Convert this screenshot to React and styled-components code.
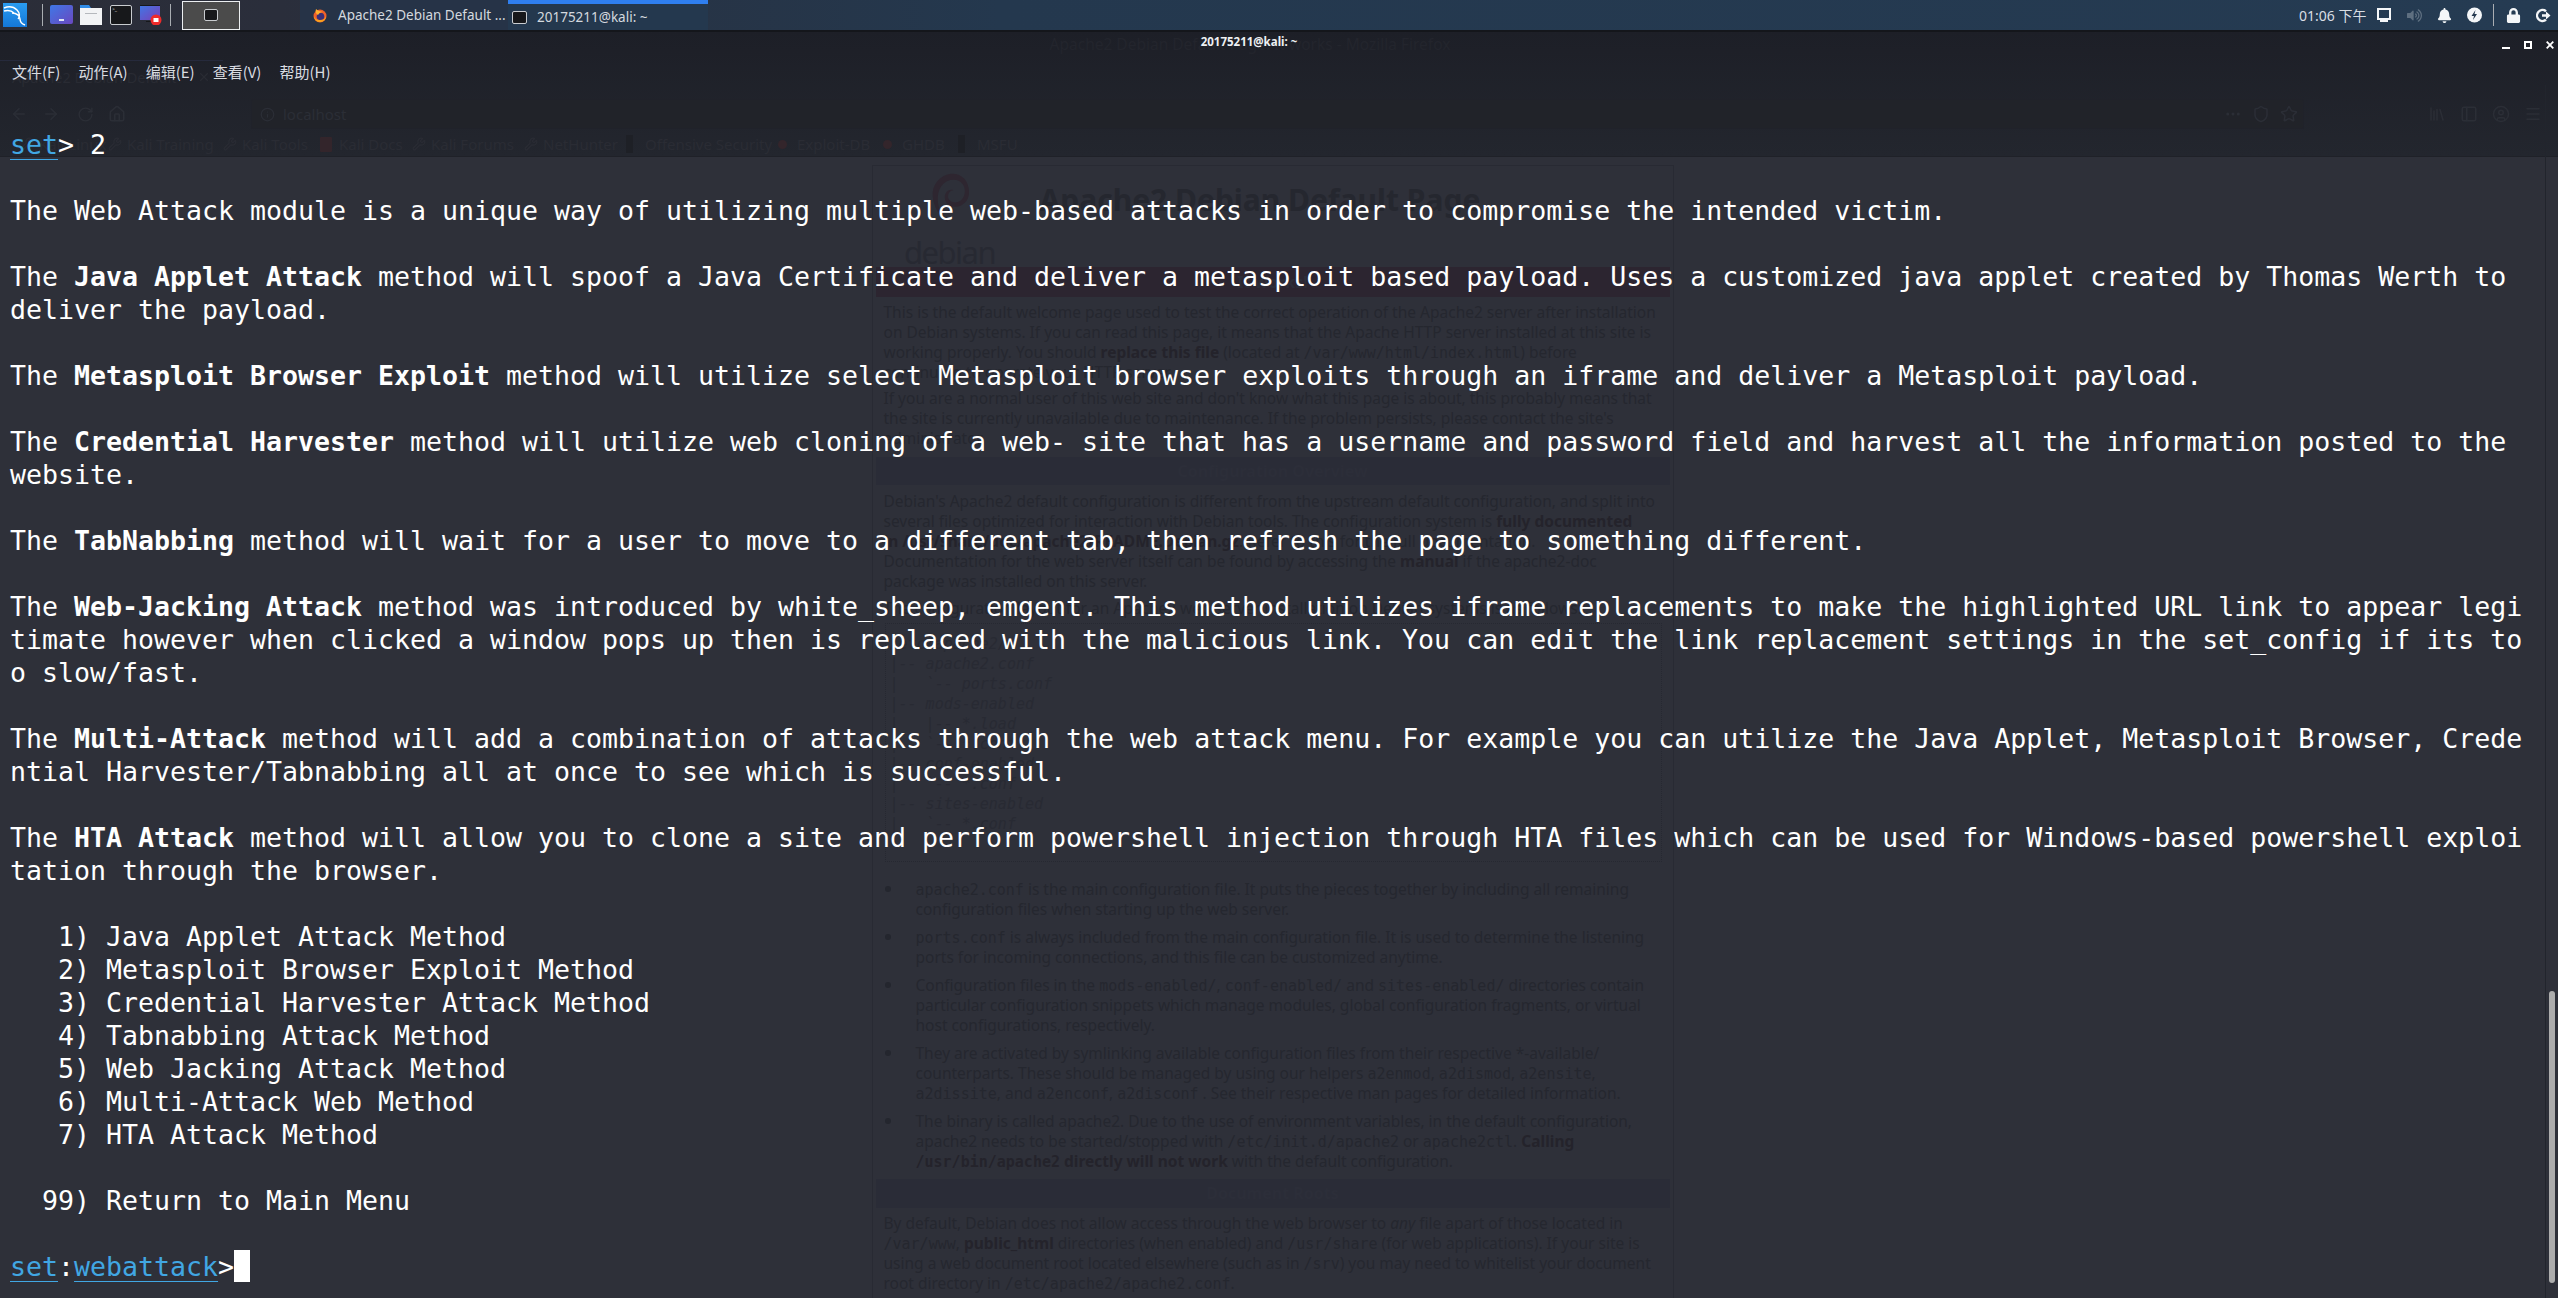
import React from "react"
import styled, { createGlobalStyle } from "styled-components"
import { FaBell, FaLock, FaVolumeUp } from "react-icons/fa"
import {
  ArrowLeft,
  ArrowRight,
  RotateCw,
  Home,
  Info,
  Star,
  Library,
  PanelLeft,
  CircleUser,
  Menu,
  Wrench,
  X,
  Shield,
  MoreHorizontal,
} from "lucide-react"

const GlobalStyle = createGlobalStyle`
  html, body {
    margin: 0;
    padding: 0;
    background: #2e3039;
    overflow: hidden;
  }
`

const Desktop = styled.div`
  width: 2558px;
  height: 1298px;
  display: flex;
  flex-direction: column;
  overflow: hidden;
  font-family: "Noto Sans", "Noto Sans CJK SC", sans-serif;
`

/* top panel */
const Panel = styled.div`
  height: 30px;
  flex: none;
  display: flex;
  align-items: center;
  border-bottom: 2px solid #14161b;
  background: linear-gradient(to right, #2b2d38 0, #2a2e3b 280px, #24384e 1000px, #253b52 2558px);
`

const KaliButton = styled.div`
  width: 24px;
  height: 24px;
  margin-left: 3px;
`

const PanelSep = styled.div`
  width: 1px;
  height: 22px;
  background: #a9adb2;
  margin: ${(p) => p.$margin};
`

const Launcher = styled.div`
  width: ${(p) => p.$w || 22}px;
  height: 20px;
  margin-left: ${(p) => p.$ml || 0}px;
  display: flex;
`

const Workspace = styled.div`
  width: 58px;
  height: 29px;
  margin-left: 11px;
  box-sizing: border-box;
  border: 1px solid #eceff1;
  background: #4b4b4b;
  display: flex;
  align-items: center;
  justify-content: center;
`

const TermGlyph = styled.div`
  width: ${(p) => p.$size}px;
  height: ${(p) => p.$size - 2}px;
  box-sizing: border-box;
  border: 1px solid #c9ccd0;
  border-radius: 2px;
  background: #17181b;
  color: #ddd;
  font-size: 5px;
  line-height: 6px;
  padding-left: 1px;
`

const Task = styled.div`
  width: ${(p) => p.$w}px;
  height: 30px;
  margin-left: ${(p) => p.$ml || 0}px;
  box-sizing: border-box;
  padding-left: ${(p) => p.$pad}px;
  display: flex;
  align-items: center;
  gap: ${(p) => p.$gap}px;
  color: #d4d9df;
  font-size: 13.5px;
  white-space: nowrap;
  background: ${(p) => (p.$active ? "#24384e" : "#263347")};
  border-top: ${(p) => (p.$active ? "4px solid #2f7ff0" : "0")};
`

const Tray = styled.div`
  margin-left: auto;
  display: flex;
  align-items: center;
  height: 30px;
  color: #f2f4f6;
`

const Clock = styled.div`
  font-size: 14px;
  color: #d9dee4;
  width: 70px;
  white-space: nowrap;
`

const TraySlot = styled.div`
  width: ${(p) => p.$w || 30}px;
  display: flex;
  justify-content: center;
  color: ${(p) => p.$color || "#f4f6f8"};
`

/* terminal window, with the browser showing through it */
const Win = styled.div`
  position: relative;
  flex: 1;
  overflow: hidden;
`

const Behind = styled.div`
  position: absolute;
  inset: 0;
  display: flex;
  flex-direction: column;
  background: #2e3039;
  color: #25272f;
`

const BrowserChrome = styled.div`
  height: 125px;
  flex: none;
  box-sizing: border-box;
  border-bottom: 1px solid #1f2128;
  background: linear-gradient(#1d1f27, #23262e);
  display: flex;
  flex-direction: column;
`

const BrowserTitle = styled.div`
  height: 28px;
  flex: none;
  box-sizing: border-box;
  padding-right: 58px;
  text-align: center;
  font-size: 15.5px;
  line-height: 24px;
  color: #23252d;
`

const TabRow = styled.div`
  height: 33px;
  flex: none;
`

const BrowserTab = styled.div`
  width: 223px;
  height: 33px;
  box-sizing: border-box;
  border-top: 1px solid #262a3c;
  padding: 0 12px 0 12px;
  display: flex;
  align-items: center;
  justify-content: space-between;
  font-size: 14.5px;
  color: #292b33;
`

const ToolRow = styled.div`
  height: 34px;
  flex: none;
  margin-top: 4px;
  display: flex;
  align-items: center;
  color: #2b2e36;
`

const ToolSlot = styled.div`
  width: ${(p) => p.$w || 32}px;
  margin-left: ${(p) => p.$ml || 0}px;
  display: flex;
  justify-content: center;
`

const AddressBar = styled.div`
  width: 2053px;
  height: 30px;
  margin-left: 118px;
  box-sizing: border-box;
  border: 1px solid #20222a;
  border-radius: 2px;
  background: #212329;
  display: flex;
  align-items: center;
  padding-left: 8px;
  gap: 8px;
  font-size: 15px;
  color: #2b2e36;
`

const AddressActions = styled.div`
  margin-left: auto;
  display: flex;
`

const Bookmarks = styled.div`
  display: flex;
  align-items: center;
  height: 26px;
  flex: none;
  padding-left: 20px;
  font-size: 15px;
  color: #2a2c34;
  white-space: pre;
`

const Bookmark = styled.div`
  width: ${(p) => p.$w}px;
  flex: none;
  display: flex;
  align-items: center;
`

const Favicon = styled.div`
  width: 19px;
  flex: none;
  display: flex;
`

const RedMark = styled.div`
  width: ${(p) => (p.$round ? 9 : 12)}px;
  height: ${(p) => (p.$round ? 9 : 15)}px;
  border-radius: ${(p) => (p.$round ? "50%" : "1px")};
  background: #33252b;
`

const DarkBar = styled.div`
  width: 7px;
  height: 18px;
  background: #1e2026;
`

const PageColumn = styled.div`
  width: 2545px;
  flex: 1;
  display: flex;
  justify-content: center;
  padding-top: 8px;
`

const GutterLine = styled.div`
  position: absolute;
  left: 2545px;
  top: 53px;
  bottom: 0;
  width: 1px;
  background: #22252d;
`

const Page = styled.div`
  width: 802px;
  box-sizing: border-box;
  border: 1px solid #282a33;
  border-bottom: 0;
  padding: 0 3px;
  font-size: 15.5px;
  line-height: 20px;
  white-space: pre;
`

const PageHead = styled.div`
  height: 101px;
  display: flex;
`

const LogoBox = styled.div`
  width: 76px;
  margin-left: 36px;
  padding-top: 6px;
  display: flex;
  flex-direction: column;
  align-items: center;
  color: #272932;
  font-size: 31px;
  line-height: 30px;
  letter-spacing: -1.5px;
`

const LogoWord = styled.div`
  margin-top: 13px;
`

const PageTitle = styled.div`
  margin-left: 52px;
  margin-top: 14px;
  font-size: 30px;
  line-height: 40px;
  font-weight: 700;
  color: #25272f;
`

const Band = styled.div`
  height: ${(p) => p.$h}px;
  line-height: ${(p) => p.$h}px;
  margin-top: ${(p) => p.$mt || 0}px;
  background: ${(p) => p.$bg || "#2a2c37"};
  text-align: center;
  font-weight: 700;
  font-size: 16px;
  color: #2c2e39;
`

const Body = styled.div`
  padding: 0 8px;
  margin-top: ${(p) => p.$mt || 0}px;
`

const Para = styled.div`
  margin-top: ${(p) => p.$mt || 0}px;
`

const Code = styled.span`
  font-family: "DejaVu Sans Mono", monospace;
  font-size: 15px;
  line-height: 0;
`

const Strong = styled.b`
  font-weight: 700;
  color: #24232b;
`

const Pre = styled.div`
  margin: 5px 0 0 1px;
  height: 239px;
  box-sizing: border-box;
  border: 1px dotted #262831;
  padding: 10px 4px;
  font-family: "DejaVu Sans Mono", monospace;
  font-size: 15px;
  font-style: italic;
  color: #282a33;
`

const BulletList = styled.ul`
  list-style: none;
  margin: 17px 0 0 0;
  padding: 0;
`

const Bullet = styled.li`
  position: relative;
  padding-left: 32px;
  margin-bottom: 8px;
  &::before {
    content: "";
    position: absolute;
    left: 1px;
    top: 7px;
    width: 6px;
    height: 6px;
    border-radius: 50%;
    background: #24262e;
  }
`

const Foreground = styled.div`
  position: absolute;
  inset: 0;
  display: flex;
  flex-direction: column;
`

const TitleBar = styled.div`
  height: 26px;
  flex: none;
  display: flex;
  align-items: center;
  justify-content: center;
  position: relative;
  font-size: 11.5px;
  font-weight: 700;
  color: #eef0f3;
  padding: 0 60px 7px 0;
  box-sizing: border-box;
`

const WinButtons = styled.div`
  position: absolute;
  right: 4px;
  top: 9px;
  display: flex;
  gap: 14px;
`

const MenuBar = styled.div`
  height: 26px;
  flex: none;
  display: flex;
  align-items: center;
  padding-left: 12px;
  gap: 18px;
  font-size: 15px;
  color: #d9dce1;
  font-family: "Noto Sans CJK SC", "Noto Sans", sans-serif;
`

const Output = styled.div`
  padding: 44px 0 0 10px;
  font-family: "DejaVu Sans Mono", monospace;
  font-size: 26.58px;
  color: #ffffff;
`

const Line = styled.div`
  height: 33px;
  line-height: 33px;
  white-space: pre;
`

const Bold = styled.b`
  font-weight: 700;
`

const Prompt = styled.span`
  color: #41a7e3;
  text-decoration: underline;
  text-decoration-thickness: 1px;
  text-underline-offset: 5px;
`

const Caret = styled.span`
  display: inline-block;
  width: 16px;
  height: 32px;
  background: #ffffff;
  vertical-align: top;
`

const ScrollThumb = styled.div`
  position: absolute;
  right: 3px;
  bottom: 15px;
  width: 6px;
  height: 292px;
  border-radius: 3px;
  background: #adadad;
`

const KaliLogo = () => (
  <svg width="24" height="24" viewBox="0 0 24 24">
    <defs>
      <linearGradient id="kali" x1="0" y1="0" x2="0" y2="1">
        <stop offset="0" stopColor="#2a9cf0" />
        <stop offset="1" stopColor="#1478d8" />
      </linearGradient>
    </defs>
    <rect width="24" height="24" fill="url(#kali)" />
    <path d="M1 5c5-2 10-1 13 2 3 3 3 7 1 9M1 8c4-1 8 0 10 2M9 10c5 0 8 3 8 6 0 3 2 5 5 6" fill="none" stroke="#fff" strokeWidth="1.5" />
  </svg>
)

const AppGrid = () => (
  <svg width="23" height="19" viewBox="0 0 23 19">
    <defs>
      <linearGradient id="grid" x1="0" y1="0" x2="1" y2="1">
        <stop offset="0" stopColor="#3f78e6" />
        <stop offset="1" stopColor="#6a48c0" />
      </linearGradient>
    </defs>
    <rect width="23" height="19" rx="2" fill="url(#grid)" />
    <rect x="9" y="14" width="5" height="2" fill="#dfe6f5" />
  </svg>
)

const FilesIcon = () => (
  <svg width="22" height="20" viewBox="0 0 22 20">
    <path d="M0 0h9l2 3H0z" fill="#2f8be6" />
    <rect y="3" width="22" height="17" fill="#f2f3f5" />
    <rect x="5" y="8" width="12" height="1" fill="#b5b8bd" />
  </svg>
)

const ScreenRec = () => (
  <svg width="22" height="20" viewBox="0 0 22 20">
    <defs>
      <linearGradient id="rec" x1="0" y1="0" x2="1" y2="1">
        <stop offset="0" stopColor="#3f78e6" />
        <stop offset="1" stopColor="#7a3fb8" />
      </linearGradient>
    </defs>
    <rect width="20" height="15" fill="url(#rec)" />
    <rect y="0" width="20" height="1" fill="#17181b" />
    <rect x="6" y="16" width="8" height="1" fill="#17181b" />
    <circle cx="16" cy="15" r="5.5" fill="#ee2b2b" />
    <rect x="13.5" y="13" width="5" height="4" fill="#fff" />
  </svg>
)

const FirefoxIcon = () => (
  <svg width="14" height="15" viewBox="0 0 14 15">
    <circle cx="7" cy="8" r="6.5" fill="#f0602a" />
    <circle cx="7.5" cy="8.5" r="3.8" fill="#3a2f78" />
    <path d="M3 1c-1 3 0 5 2 6 1-2 3-3 5-3-3-1-5-1-7-3z" fill="#ffb02e" />
    <path d="M1 8c0 4 3 6 6 6 3 0 6-2 6-6-1 3-3 4-6 4-3 0-5-1-6-4z" fill="#f9a01e" />
  </svg>
)

const TrayMonitor = () => (
  <svg width="14" height="15" viewBox="0 0 14 15">
    <path d="M1 1h12v10H1z" fill="none" stroke="#f4f6f8" strokeWidth="2" />
    <rect x="3" y="12" width="8" height="2" fill="#f4f6f8" />
  </svg>
)

const TrayBolt = () => (
  <svg width="15" height="16" viewBox="0 0 15 16">
    <circle cx="7.5" cy="8" r="7.5" fill="#f4f6f8" />
    <path d="M8.5 3 4.5 9h2.5l-1 4 4-6H7.5z" fill="#24384e" />
  </svg>
)

const TrayLogout = () => (
  <svg width="15" height="15" viewBox="0 0 15 15">
    <path d="M10 3.2A5.5 5.5 0 1 0 10 11.8" fill="none" stroke="#f4f6f8" strokeWidth="2.4" />
    <path d="M6 6.2h4V3.5l4.5 4-4.5 4V8.8H6z" fill="#f4f6f8" />
  </svg>
)

const MinButton = () => (
  <svg width="8" height="8" viewBox="0 0 8 8">
    <rect y="6" width="8" height="2" fill="#fff" />
  </svg>
)

const MaxButton = () => (
  <svg width="8" height="8" viewBox="0 0 8 8">
    <path d="M1 1h6v6H1z" fill="none" stroke="#fff" strokeWidth="2" />
  </svg>
)

const CloseButton = () => (
  <svg width="8" height="8" viewBox="0 0 8 8">
    <path d="M.7.7l6.6 6.6M7.3.7.7 7.3" stroke="#fff" strokeWidth="1.8" />
  </svg>
)

const DebianSwirl = () => (
  <svg width="46" height="60" viewBox="0 0 46 60">
    <path d="M24 2C10 4 2 16 3 28c1 12 8 24 18 30-8-8-13-18-12-30C10 17 17 9 27 9c9 0 14 7 13 15-1 8-7 12-13 11-5-1-7-5-6-9 1-3 3-5 6-5-5-2-10 2-10 8 0 7 6 11 12 11 9 0 16-7 16-17C45 10 36 1 24 2z" fill="#2e2630" />
  </svg>
)

const KaliFav = () => (
  <Favicon>
    <Wrench size={14} />
  </Favicon>
)

const App = () => (
  <Desktop>
    <GlobalStyle />
    <Panel>
      <KaliButton>
        <KaliLogo />
      </KaliButton>
      <PanelSep $margin="0 0 0 15px" />
      <Launcher $ml={7} $w={23}>
        <AppGrid />
      </Launcher>
      <Launcher $ml={7}>
        <FilesIcon />
      </Launcher>
      <Launcher $ml={8}>
        <TermGlyph $size={22}>&gt;_</TermGlyph>
      </Launcher>
      <Launcher $ml={8}>
        <ScreenRec />
      </Launcher>
      <PanelSep $margin="0 0 0 8px" />
      <Workspace>
        <TermGlyph $size={14} />
      </Workspace>
      <Task $w={208} $ml={60} $pad={13} $gap={11}>
        <FirefoxIcon />
        Apache2 Debian Default ...
      </Task>
      <Task $w={200} $pad={4} $gap={10} $active>
        <TermGlyph $size={15} />
        20175211@kali: ~
      </Task>
      <Tray>
        <Clock>01:06 下午</Clock>
        <TraySlot $w={30}>
          <TrayMonitor />
        </TraySlot>
        <TraySlot $w={30} $color="#5e6f80">
          <FaVolumeUp size={15} />
        </TraySlot>
        <TraySlot $w={30}>
          <FaBell size={15} />
        </TraySlot>
        <TraySlot $w={30}>
          <TrayBolt />
        </TraySlot>
        <PanelSep $margin="0 4px" />
        <TraySlot $w={30}>
          <FaLock size={15} />
        </TraySlot>
        <TraySlot $w={30}>
          <TrayLogout />
        </TraySlot>
      </Tray>
    </Panel>

    <Win>
      <Behind>
        <BrowserChrome>
          <BrowserTitle>Apache2 Debian Default Page: It works - Mozilla Firefox</BrowserTitle>
          <TabRow>
            <BrowserTab>
              Apache2 Debian Default
              <X size={14} />
            </BrowserTab>
          </TabRow>
          <ToolRow>
            <ToolSlot $ml={3}>
              <ArrowLeft size={18} />
            </ToolSlot>
            <ToolSlot>
              <ArrowRight size={18} />
            </ToolSlot>
            <ToolSlot $ml={2}>
              <RotateCw size={17} />
            </ToolSlot>
            <ToolSlot>
              <Home size={18} />
            </ToolSlot>
            <AddressBar>
              <Info size={15} />
              localhost
              <AddressActions>
                <ToolSlot $w={28}>
                  <MoreHorizontal size={18} />
                </ToolSlot>
                <ToolSlot $w={28}>
                  <Shield size={18} />
                </ToolSlot>
                <ToolSlot $w={28}>
                  <Star size={18} />
                </ToolSlot>
              </AddressActions>
            </AddressBar>
            <ToolSlot $ml={117} $w={32}>
              <Library size={18} />
            </ToolSlot>
            <ToolSlot $w={32}>
              <PanelLeft size={18} />
            </ToolSlot>
            <ToolSlot $w={32}>
              <CircleUser size={18} />
            </ToolSlot>
            <ToolSlot $w={32}>
              <Menu size={18} />
            </ToolSlot>
          </ToolRow>
          <Bookmarks>
            <Bookmark $w={88}><KaliFav />Kali Linux</Bookmark>
            <Bookmark $w={115}><KaliFav />Kali Training</Bookmark>
            <Bookmark $w={97}><KaliFav />Kali Tools</Bookmark>
            <Bookmark $w={92}><Favicon><RedMark /></Favicon>Kali Docs</Bookmark>
            <Bookmark $w={112}><KaliFav />Kali Forums</Bookmark>
            <Bookmark $w={102}><KaliFav />NetHunter</Bookmark>
            <Bookmark $w={152}><Favicon><DarkBar /></Favicon>Offensive Security</Bookmark>
            <Bookmark $w={105}><Favicon><RedMark $round /></Favicon>Exploit-DB</Bookmark>
            <Bookmark $w={75}><Favicon><RedMark $round /></Favicon>GHDB</Bookmark>
            <Bookmark $w={60}><Favicon><DarkBar /></Favicon>MSFU</Bookmark>
          </Bookmarks>
        </BrowserChrome>
        <PageColumn>
          <Page>
            <PageHead>
              <LogoBox>
                <DebianSwirl />
                <LogoWord>debian</LogoWord>
              </LogoBox>
              <PageTitle>Apache2 Debian Default Page</PageTitle>
            </PageHead>
            <Band $h={30} $bg="#2c2530">It works!</Band>
            <Body $mt={5}>
              <Para>
                {"This is the default welcome page used to test the correct operation of the Apache2 server after installation\n"}
                {"on Debian systems. If you can read this page, it means that the Apache HTTP server installed at this site is\n"}
                working properly. You should <Strong>replace this file</Strong> (located at <Code>/var/www/html/index.html</Code>) before{"\n"}
                continuing to operate your HTTP server.
              </Para>
              <Para $mt={6}>
                {"If you are a normal user of this web site and don't know what this page is about, this probably means that\n"}
                {"the site is currently unavailable due to maintenance. If the problem persists, please contact the site's\n"}
                administrator.
              </Para>
            </Body>
            <Band $h={28} $mt={9}>Configuration Overview</Band>
            <Body $mt={6}>
              <Para>
                {"Debian's Apache2 default configuration is different from the upstream default configuration, and split into\n"}
                several files optimized for interaction with Debian tools. The configuration system is <Strong>fully documented</Strong>{"\n"}
                <Strong>in /usr/share/doc/apache2/README.Debian.gz</Strong>. Refer to this for the full documentation.{"\n"}
                Documentation for the web server itself can be found by accessing the <Strong>manual</Strong> if the apache2-doc{"\n"}
                package was installed on this server.
              </Para>
              <Para $mt={7}>The configuration layout for an Apache2 web server installation on Debian systems is as follows:</Para>
              <Pre>
                {"/etc/apache2/\n|-- apache2.conf\n|   `-- ports.conf\n|-- mods-enabled\n|   |-- *.load\n|   `-- *.conf\n|-- conf-enabled\n|   `-- *.conf\n|-- sites-enabled\n|   `-- *.conf"}
              </Pre>
              <BulletList>
                <Bullet>
                  <Code>apache2.conf</Code> is the main configuration file. It puts the pieces together by including all remaining{"\n"}
                  configuration files when starting up the web server.
                </Bullet>
                <Bullet>
                  <Code>ports.conf</Code> is always included from the main configuration file. It is used to determine the listening{"\n"}
                  ports for incoming connections, and this file can be customized anytime.
                </Bullet>
                <Bullet>
                  Configuration files in the <Code>mods-enabled/</Code>, <Code>conf-enabled/</Code> and <Code>sites-enabled/</Code> directories contain{"\n"}
                  particular configuration snippets which manage modules, global configuration fragments, or virtual{"\n"}
                  host configurations, respectively.
                </Bullet>
                <Bullet>
                  They are activated by symlinking available configuration files from their respective *-available/{"\n"}
                  counterparts. These should be managed by using our helpers <Code>a2enmod</Code>, <Code>a2dismod</Code>, <Code>a2ensite</Code>,{"\n"}
                  <Code>a2dissite</Code>, and <Code>a2enconf</Code>, <Code>a2disconf</Code> . See their respective man pages for detailed information.
                </Bullet>
                <Bullet>
                  The binary is called apache2. Due to the use of environment variables, in the default configuration,{"\n"}
                  apache2 needs to be started/stopped with <Code>/etc/init.d/apache2</Code> or <Code>apache2ctl</Code>. <Strong>Calling</Strong>{"\n"}
                  <Strong><Code>/usr/bin/apache2</Code> directly will not work</Strong> with the default configuration.
                </Bullet>
              </BulletList>
            </Body>
            <Band $h={29} $mt={6}>Document Roots</Band>
            <Body $mt={5}>
              <Para>
                By default, Debian does not allow access through the web browser to <i>any</i> file apart of those located in{"\n"}
                <Code>/var/www</Code>, <Strong>public_html</Strong> directories (when enabled) and <Code>/usr/share</Code> (for web applications). If your site is{"\n"}
                using a web document root located elsewhere (such as in <Code>/srv</Code>) you may need to whitelist your document{"\n"}
                root directory in <Code>/etc/apache2/apache2.conf</Code>.
              </Para>
            </Body>
          </Page>
        </PageColumn>
        <GutterLine />
      </Behind>

      <Foreground>
        <TitleBar>
          20175211@kali: ~
          <WinButtons>
            <MinButton />
            <MaxButton />
            <CloseButton />
          </WinButtons>
        </TitleBar>
        <MenuBar>
          <span>文件(F)</span>
          <span>动作(A)</span>
          <span>编辑(E)</span>
          <span>查看(V)</span>
          <span>帮助(H)</span>
        </MenuBar>
        <Output>
          <Line><Prompt>set</Prompt>&gt; 2</Line>
          <Line />
          <Line>The Web Attack module is a unique way of utilizing multiple web-based attacks in order to compromise the intended victim.</Line>
          <Line />
          <Line>The <Bold>Java Applet Attack</Bold> method will spoof a Java Certificate and deliver a metasploit based payload. Uses a customized java applet created by Thomas Werth to</Line>
          <Line>deliver the payload.</Line>
          <Line />
          <Line>The <Bold>Metasploit Browser Exploit</Bold> method will utilize select Metasploit browser exploits through an iframe and deliver a Metasploit payload.</Line>
          <Line />
          <Line>The <Bold>Credential Harvester</Bold> method will utilize web cloning of a web- site that has a username and password field and harvest all the information posted to the</Line>
          <Line>website.</Line>
          <Line />
          <Line>The <Bold>TabNabbing</Bold> method will wait for a user to move to a different tab, then refresh the page to something different.</Line>
          <Line />
          <Line>The <Bold>Web-Jacking Attack</Bold> method was introduced by white_sheep, emgent. This method utilizes iframe replacements to make the highlighted URL link to appear legi</Line>
          <Line>timate however when clicked a window pops up then is replaced with the malicious link. You can edit the link replacement settings in the set_config if its to</Line>
          <Line>o slow/fast.</Line>
          <Line />
          <Line>The <Bold>Multi-Attack</Bold> method will add a combination of attacks through the web attack menu. For example you can utilize the Java Applet, Metasploit Browser, Crede</Line>
          <Line>ntial Harvester/Tabnabbing all at once to see which is successful.</Line>
          <Line />
          <Line>The <Bold>HTA Attack</Bold> method will allow you to clone a site and perform powershell injection through HTA files which can be used for Windows-based powershell exploi</Line>
          <Line>tation through the browser.</Line>
          <Line />
          <Line>   1) Java Applet Attack Method</Line>
          <Line>   2) Metasploit Browser Exploit Method</Line>
          <Line>   3) Credential Harvester Attack Method</Line>
          <Line>   4) Tabnabbing Attack Method</Line>
          <Line>   5) Web Jacking Attack Method</Line>
          <Line>   6) Multi-Attack Web Method</Line>
          <Line>   7) HTA Attack Method</Line>
          <Line />
          <Line>  99) Return to Main Menu</Line>
          <Line />
          <Line><Prompt>set</Prompt>:<Prompt>webattack</Prompt>&gt;<Caret /></Line>
        </Output>
      </Foreground>
      <ScrollThumb />
    </Win>
  </Desktop>
)

export default App
